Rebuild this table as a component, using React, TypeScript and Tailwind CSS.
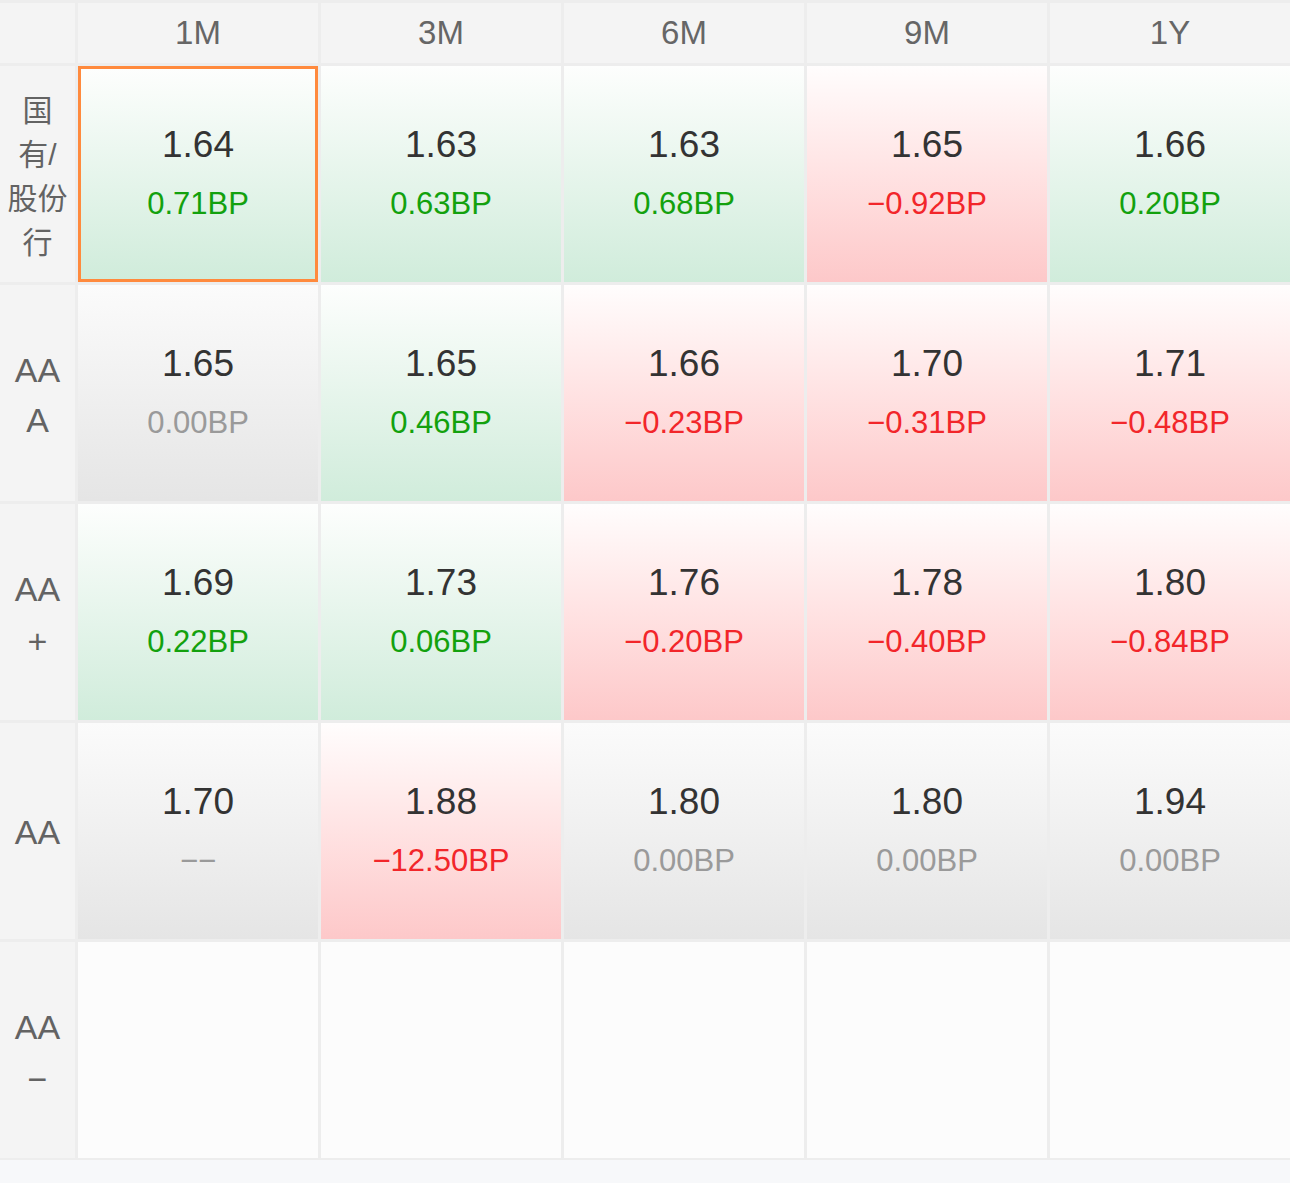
import React from "react";

type Tone = "green" | "red" | "gray" | "empty";
type Cell = { v?: string; d?: string; tone: Tone; sel?: boolean };

const cols = ["1M", "3M", "6M", "9M", "1Y"];

const rows: { label: React.ReactNode; cells: Cell[] }[] = [
  {
    label: (
      <div className="flex flex-col items-center pt-[6px] text-[30px] leading-[44px]">
        <span>国</span>
        <span>有/</span>
        <span>股份</span>
        <span>行</span>
      </div>
    ),
    cells: [
      { v: "1.64", d: "0.71BP", tone: "green", sel: true },
      { v: "1.63", d: "0.63BP", tone: "green" },
      { v: "1.63", d: "0.68BP", tone: "green" },
      { v: "1.65", d: "−0.92BP", tone: "red" },
      { v: "1.66", d: "0.20BP", tone: "green" },
    ],
  },
  {
    label: (
      <div className="flex flex-col items-center pt-[4px] text-[34px] leading-[50px]">
        <span>AA</span>
        <span>A</span>
      </div>
    ),
    cells: [
      { v: "1.65", d: "0.00BP", tone: "gray" },
      { v: "1.65", d: "0.46BP", tone: "green" },
      { v: "1.66", d: "−0.23BP", tone: "red" },
      { v: "1.70", d: "−0.31BP", tone: "red" },
      { v: "1.71", d: "−0.48BP", tone: "red" },
    ],
  },
  {
    label: (
      <div className="flex flex-col items-center pt-[6px] text-[34px] leading-[52px]">
        <span>AA</span>
        <span>+</span>
      </div>
    ),
    cells: [
      { v: "1.69", d: "0.22BP", tone: "green" },
      { v: "1.73", d: "0.06BP", tone: "green" },
      { v: "1.76", d: "−0.20BP", tone: "red" },
      { v: "1.78", d: "−0.40BP", tone: "red" },
      { v: "1.80", d: "−0.84BP", tone: "red" },
    ],
  },
  {
    label: (
      <div className="flex flex-col items-center pt-[2px] text-[34px] leading-[52px]">
        <span>AA</span>
      </div>
    ),
    cells: [
      { v: "1.70", d: "−−", tone: "gray" },
      { v: "1.88", d: "−12.50BP", tone: "red" },
      { v: "1.80", d: "0.00BP", tone: "gray" },
      { v: "1.80", d: "0.00BP", tone: "gray" },
      { v: "1.94", d: "0.00BP", tone: "gray" },
    ],
  },
  {
    label: (
      <div className="flex flex-col items-center pt-[6px] text-[34px] leading-[52px]">
        <span>AA</span>
        <span>−</span>
      </div>
    ),
    cells: [
      { tone: "empty" },
      { tone: "empty" },
      { tone: "empty" },
      { tone: "empty" },
      { tone: "empty" },
    ],
  },
];

const bgClass: Record<Tone, string> = {
  green: "bg-gradient-to-b from-[#fdfefd] to-[#d0ecdb]",
  red: "bg-gradient-to-b from-[#fffdfd] to-[#fdc8c9]",
  gray: "bg-gradient-to-b from-[#fbfbfb] to-[#e5e5e5]",
  empty: "bg-[#fcfcfc]",
};

function deltaColor(c: Cell) {
  if (c.tone === "green") return "text-[#13a10e]";
  if (c.tone === "red") return "text-[#f2262a]";
  return "text-[#9a9a9a]";
}

export default function App() {
  return (
    <div
      className="w-[1290px] bg-[#ededed]"
      style={{ fontFamily: '"Liberation Sans", "Noto Sans CJK SC", sans-serif' }}
    >
      <div className="grid grid-cols-[75px_repeat(5,240px)] grid-rows-[60px_repeat(5,216px)] gap-[3px] pt-[3px] pb-[2px]">
        <div className="bg-[#f4f4f4]" />
        {cols.map((c) => (
          <div
            key={c}
            className="flex items-center justify-center bg-[#f4f4f4] text-[33px] text-[#666666]"
          >
            {c}
          </div>
        ))}
        {rows.map((r, ri) => (
          <React.Fragment key={ri}>
            <div className="flex items-center justify-center bg-[#f4f4f4] text-[#636363]">
              {r.label}
            </div>
            {r.cells.map((c, ci) => (
              <div
                key={ci}
                className={`flex flex-col items-center justify-center ${bgClass[c.tone]} ${
                  c.sel ? "border-[3px] border-[#ff8a3d]" : ""
                }`}
              >
                {c.v && (
                  <>
                    <div className="text-[37px] leading-[44px] text-[#333333]">{c.v}</div>
                    <div className={`mt-[15px] text-[31px] leading-[44px] ${deltaColor(c)}`}>
                      {c.d}
                    </div>
                  </>
                )}
              </div>
            ))}
          </React.Fragment>
        ))}
      </div>
      <div className="h-[23px] bg-[#f7f8fa]" />
    </div>
  );
}
